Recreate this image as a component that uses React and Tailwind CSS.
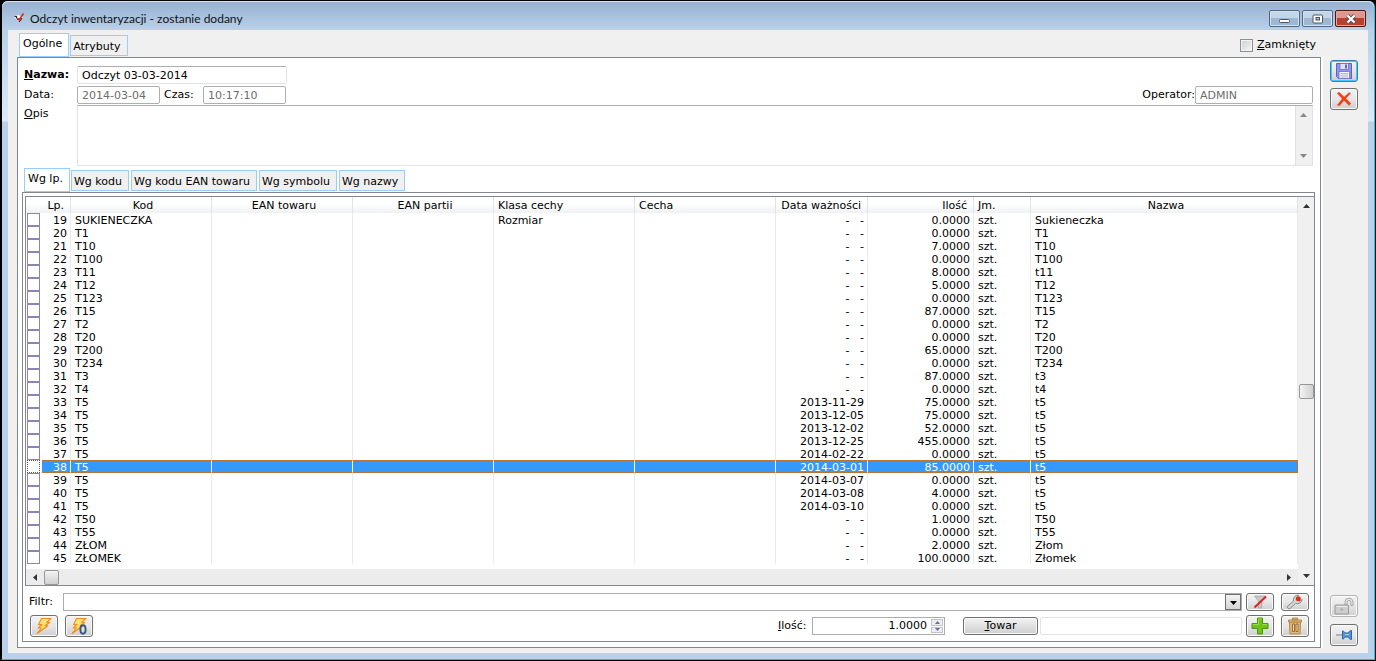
import React, { useState } from 'react';

const NAMES = { 19: 'Sukieneczka', 23: 't11', 31: 't3', 32: 't4', 44: 'Złom', 45: 'Złomek' };

// lp, code, expiry date, quantity
const ITEMS = [
  [19, 'SUKIENECZKA', '', '0.0000'],
  [20, 'T1', '', '0.0000'],
  [21, 'T10', '', '7.0000'],
  [22, 'T100', '', '0.0000'],
  [23, 'T11', '', '8.0000'],
  [24, 'T12', '', '5.0000'],
  [25, 'T123', '', '0.0000'],
  [26, 'T15', '', '87.0000'],
  [27, 'T2', '', '0.0000'],
  [28, 'T20', '', '0.0000'],
  [29, 'T200', '', '65.0000'],
  [30, 'T234', '', '0.0000'],
  [31, 'T3', '', '87.0000'],
  [32, 'T4', '', '0.0000'],
  [33, 'T5', '2013-11-29', '75.0000'],
  [34, 'T5', '2013-12-05', '75.0000'],
  [35, 'T5', '2013-12-02', '52.0000'],
  [36, 'T5', '2013-12-25', '455.0000'],
  [37, 'T5', '2014-02-22', '0.0000'],
  [38, 'T5', '2014-03-01', '85.0000'],
  [39, 'T5', '2014-03-07', '0.0000'],
  [40, 'T5', '2014-03-08', '4.0000'],
  [41, 'T5', '2014-03-10', '0.0000'],
  [42, 'T50', '', '1.0000'],
  [43, 'T55', '', '0.0000'],
  [44, 'ZŁOM', '', '2.0000'],
  [45, 'ZŁOMEK', '', '100.0000'],
];

const itemName = (lp, code) => NAMES[lp] || (code === 'T5' ? 't5' : code);

const COLUMNS = [
  { label: 'Lp.', col: 'w-[29px]', head: 'text-right pr-1.5', cell: 'text-right pr-[3px]' },
  { label: 'Kod', col: 'w-[141px]', head: 'text-center pl-1', cell: 'pl-1' },
  { label: 'EAN towaru', col: 'w-[141px]', head: 'text-center pl-1', cell: 'pl-1' },
  { label: 'EAN partii', col: 'w-[141px]', head: 'text-center pl-1', cell: 'pl-1' },
  { label: 'Klasa cechy', col: 'w-[141px]', head: 'text-left pl-1', cell: 'pl-1' },
  { label: 'Cecha', col: 'w-[141px]', head: 'text-left pl-1', cell: 'pl-1' },
  { label: 'Data ważności', col: 'w-[92px]', head: 'text-right pr-1.5', cell: 'text-right pr-[3px] whitespace-pre' },
  { label: 'Ilość', col: 'w-[106px]', head: 'text-right pr-1.5', cell: 'text-right pr-[3px]' },
  { label: 'Jm.', col: 'w-[57px]', head: 'text-left pl-1', cell: 'pl-1' },
  { label: 'Nazwa', col: 'w-auto', head: 'text-center pl-1', cell: 'pl-1' },
];

// Small raised button that holds a single icon
const IconButton = ({ label, className = 'h-[22px] border-[#707070]', children }) => (
  <button
    type="button"
    aria-label={label}
    className={`flex w-7 shrink-0 items-center justify-center rounded-[3px] border bg-linear-to-b from-[#f3f3f3] via-[#e6e6e6] to-[#cfcfcf] shadow-[inset_0_0_0_1px_#fafafa] ${className}`}
  >
    {children}
  </button>
);

const Arrow = ({ dir, className = 'fill-[#333]' }) => {
  const points = {
    up: '0,5 3.5,1 7,5',
    down: '0,1 7,1 3.5,5',
    left: '5,0 1,3.5 5,7',
    right: '1,0 5,3.5 1,7',
  };
  const vertical = dir === 'up' || dir === 'down';
  return (
    <svg width={vertical ? 7 : 6} height={vertical ? 6 : 7} className={className} aria-hidden="true">
      <polygon points={points[dir]} />
    </svg>
  );
};

const Tabs = ({ tabs, active, onChange }) => (
  <div role="tablist" className="flex h-6 items-end gap-0.5">
    {tabs.map((tab) => (
      <button
        key={tab}
        type="button"
        role="tab"
        aria-selected={tab === active}
        onClick={() => onChange(tab)}
        className={
          tab === active
            ? '-mr-px h-6 border border-[#99ccff] bg-white pr-1.5 pb-0.5 pl-[3px] whitespace-nowrap'
            : 'mb-px h-[21px] border border-[#99ccff] bg-[#f0f0f0] pt-0.5 pr-1.5 pl-0.5 whitespace-nowrap'
        }
      >
        {tab}
      </button>
    ))}
  </div>
);

const Lightning = ({ zero }) => (
  <svg width="18" height="18" viewBox="0 0 18 18" aria-hidden="true">
    <path
      d="M6.500 1.500H16l-4.600 3.700h3.400l-4.600 3.600h2.600L2.200 16.500 6.300 11H3.200l3.600-3.400H3.600z"
      fill="#ffdf70"
      stroke="#f58a1c"
      strokeWidth="1.100"
      strokeLinejoin="round"
    />
    <path d="M8 2.800h5L7.500 6.500" fill="none" stroke="#fff0b0" strokeWidth=".8" />
    {zero && <ellipse cx="13" cy="12.500" rx="2.600" ry="4.200" fill="none" stroke="#34567f" strokeWidth="1.900" />}
  </svg>
);

const SaveIcon = () => (
  <svg width="18" height="18" viewBox="0 0 18 18" aria-hidden="true">
    <path d="M1.500 1.500h15v15h-13l-2-2z" fill="#9194ea" stroke="#5d61c0" />
    <rect x="5" y="1.500" width="8.500" height="6" fill="#dfe2f6" stroke="#6c70cc" strokeWidth=".8" />
    <rect x="10" y="2.500" width="2" height="4" fill="#6467c6" />
    <rect x="4" y="9.500" width="10.500" height="7" fill="#f2f3fb" stroke="#6c70cc" strokeWidth=".8" />
    <path d="M5.500 11.500h7.500M5.500 13.200h7.500M5.500 15h7.500" stroke="#a9a9b8" strokeWidth=".8" />
  </svg>
);

const CancelIcon = () => (
  <svg width="16" height="16" viewBox="0 0 16 16" aria-hidden="true">
    <path d="M1.200 2.200l2-1L8.200 6l5-4.500 1.300.8L9.800 7.600l5 4.800-1.600 2L8 9.500l-4.300 5-2.500-.3 5-6.400z" fill="#ee4218" stroke="#e03a14" strokeWidth=".4" />
  </svg>
);

const FilterOffIcon = () => (
  <svg width="16" height="14" viewBox="0 0 16 14" aria-hidden="true">
    <path d="M2.500 1h11L9.600 6v7H6.400V6z" fill="#c8c8c8" stroke="#a4a4a4" strokeWidth=".8" />
    <path d="M2.500 12.500L14 1.500" stroke="#e02020" strokeWidth="2" />
  </svg>
);

const WrenchIcon = () => (
  <svg width="18" height="16" viewBox="0 0 18 16" aria-hidden="true">
    <path
      d="M12.500 1.200a4.600 4.600 0 0 0-5 5.800L1.800 12a1.700 1.700 0 0 0 2.400 2.400L9.600 9.300a4.600 4.600 0 0 0 6.500-3.800l-3 1.700-2.300-2.400z"
      fill="#d4d4d4"
      stroke="#8a8a8a"
      strokeWidth="1"
    />
    <circle cx="12.300" cy="4.800" r="2.500" fill="#dc3018" />
  </svg>
);

const PlusIcon = () => (
  <svg width="18" height="18" viewBox="0 0 18 18" aria-hidden="true">
    <path d="M6.500 1h5v5.500H17v5h-5.500V17h-5v-5.500H1v-5h5.500z" fill="#6cc417" stroke="#4a9410" />
    <path d="M7.500 2h3M2 7.500h5.500V3M11.500 7.500H16" fill="none" stroke="#a0e050" />
  </svg>
);

const TrashIcon = () => (
  <svg width="16" height="18" viewBox="0 0 16 18" aria-hidden="true">
    <path d="M2.500 5h11l-.5 12H3z" fill="#e2b878" stroke="#b58646" />
    <path d="M1.500 3h13v2h-13zM5.500 1h5v2h-5z" fill="#e6bf84" stroke="#b58646" />
    <path d="M5.500 7h2v7.500h-2zM9 7h2v7.500H9z" fill="#f3dcb4" stroke="#8a622c" strokeWidth=".9" />
  </svg>
);

const UnlockIcon = () => (
  <svg width="20" height="18" viewBox="0 0 20 18" aria-hidden="true">
    <path d="M11 8V5a4 3.800 0 0 1 8 0v3.500h-2.200V5.200a1.800 1.800 0 0 0-3.600 0V8z" fill="#e6e6e6" stroke="#a0a0a0" strokeWidth=".9" />
    <rect x="1" y="8" width="13.500" height="9" rx="1" fill="#cdcdcd" stroke="#989898" />
    <path d="M2.500 9.500h10.500" stroke="#eee" />
    <circle cx="7.800" cy="12.500" r="1.300" fill="#aaa" />
  </svg>
);

const PinIcon = () => (
  <svg width="18" height="14" viewBox="0 0 18 14" aria-hidden="true">
    <path d="M1 7h7" stroke="#a0a0a0" strokeWidth="1.500" />
    <path d="M7.500 3v8c1.500 0 2-1.200 2.500-2h3.500c.5 1.200 1 2.500 3 2.500v-9c-2 0-2.500 1.300-3 2.500H10c-.5-.8-1-2-2.500-2z" fill="#4f97da" stroke="#2a67a8" />
    <path d="M10 6.500h4" stroke="#a9d2f6" />
  </svg>
);

const TitleBar = () => (
  <header className="flex h-[29px] items-center rounded-t-md bg-linear-to-b from-[#97b0cf] to-[#b9d1ea] pr-2 pl-[11px] shadow-[inset_0_1px_0_#d5e2f0]">
    <svg width="12" height="12" viewBox="0 0 12 12" className="mt-1 shrink-0" aria-hidden="true">
      <path d="M1 5l4-2 5 2-4 5z" fill="#fff" />
      <path d="M1.500 4.500h2v2M6 10l3-4M4 7.500h2" fill="none" stroke="#222" strokeWidth="1.200" />
      <path d="M4.500 6L6 8l4.500-6.500" fill="none" stroke="#d02818" strokeWidth="1.500" />
    </svg>
    <h1 className="mt-1.5 ml-[5px] font-[Lato,'Open_Sans',sans-serif] text-xs text-[#111]">Odczyt inwentaryzacji - zostanie dodany</h1>
    <div className="mt-1.5 ml-auto flex gap-0.5">
      <button type="button" aria-label="Minimalizuj" className="flex h-[17px] w-[31px] items-center justify-center rounded-xs border border-[#53677f] bg-linear-to-b from-[#c3d5e8] from-50% to-[#9db8d3] to-50% shadow-[inset_0_0_0_1px_#d4e1ee]">
        <svg width="12" height="10" aria-hidden="true"><rect x=".5" y="5.500" width="10" height="3" rx="1" fill="#fff" stroke="#4d5564" /></svg>
      </button>
      <button type="button" aria-label="Przywróć" className="flex h-[17px] w-[31px] items-center justify-center rounded-xs border border-[#53677f] bg-linear-to-b from-[#c3d5e8] from-50% to-[#9db8d3] to-50% shadow-[inset_0_0_0_1px_#d4e1ee]">
        <svg width="12" height="10" aria-hidden="true">
          <rect x="1" y="1" width="9.500" height="8" rx="1" fill="#fff" stroke="#4d5564" />
          <rect x="4" y="3.500" width="3.500" height="2.500" fill="#9db8d3" stroke="#4d5564" />
        </svg>
      </button>
      <button type="button" aria-label="Zamknij" className="flex h-[17px] w-[31px] items-center justify-center rounded-xs border border-[#4e1611] bg-linear-to-b from-[#dc9a8e] from-50% to-[#b9402c] to-50% shadow-[inset_0_0_0_1px_#e3a99f]">
        <svg width="12" height="10" viewBox="0 0 12 10" aria-hidden="true">
          <path d="M2.500 1.500l7 7M9.500 1.500l-7 7" stroke="#4d5564" strokeWidth="4" />
          <path d="M2.500 1.500l7 7M9.500 1.500l-7 7" stroke="#fff" strokeWidth="2.200" />
        </svg>
      </button>
    </div>
  </header>
);

const HeaderForm = () => (
  <form className="flex flex-col pt-2 pr-[7px] pl-1.5">
    <div className="mb-0.5 flex h-[18px] items-center">
      <label htmlFor="nazwa" className="w-[53px] shrink-0 font-bold"><u>N</u>azwa:</label>
      <input id="nazwa" defaultValue="Odczyt 03-03-2014" className="h-[18px] w-[210px] rounded-xs border border-[#e2e3ea] border-t-[#abadb3] bg-white px-1" />
    </div>
    <div className="mb-px flex h-[18px] items-center">
      <label htmlFor="data" className="w-[53px] shrink-0">Data:</label>
      <input id="data" disabled defaultValue="2014-03-04" className="h-[18px] w-[83px] rounded-xs border border-[#afafaf] bg-white px-1 text-[#6d6d6d]" />
      <label htmlFor="czas" className="w-[43px] shrink-0 pl-1">Czas:</label>
      <input id="czas" disabled defaultValue="10:17:10" className="h-[18px] w-[83px] rounded-xs border border-[#afafaf] bg-white px-1 text-[#6d6d6d]" />
      <label htmlFor="operator" className="ml-auto">Operator:</label>
      <input id="operator" disabled defaultValue="ADMIN" className="h-[18px] w-[118px] rounded-xs border border-[#afafaf] bg-white px-1 text-[#6d6d6d]" />
    </div>
    <div className="flex">
      <label htmlFor="opis" className="w-[53px] shrink-0 pt-px"><u>O</u>pis</label>
      <div className="flex h-[61px] grow border border-[#e2e3ea] border-t-[#abadb3]">
        <textarea id="opis" className="h-full grow resize-none overflow-hidden px-1 outline-none" />
        <div className="flex w-[17px] flex-col items-center justify-between bg-[#f0f0f0] py-1.5 shadow-[inset_1px_0_0_#e0e0e0]">
          <Arrow dir="up" className="fill-[#888]" />
          <Arrow dir="down" className="fill-[#888]" />
        </div>
      </div>
    </div>
  </form>
);

const ItemsTable = ({ selected, onSelect }) => (
  <table className="w-full table-fixed border-separate border-spacing-0">
    <colgroup>
      <col className="w-4" />
      {COLUMNS.map((c) => <col key={c.label} className={c.col} />)}
    </colgroup>
    <thead>
      <tr className="h-4">
        <th className="bg-linear-to-b from-white from-40% to-[#eff1f2] p-0" aria-label="Zaznacz" />
        {COLUMNS.map((c) => (
          <th key={c.label} className={`border-r border-[#e0e3e6] bg-linear-to-b from-white from-40% to-[#eff1f2] pt-0.5 pb-0 leading-[14px] font-normal whitespace-nowrap ${c.head}`}>
            {c.label}
          </th>
        ))}
      </tr>
    </thead>
    <tbody>
      {ITEMS.map(([lp, code, date, qty]) => {
        const isSelected = lp === selected;
        const cells = [lp, code, '', '', lp === 19 ? 'Rozmiar' : '', '', date || '-   -', qty, 'szt.', itemName(lp, code)];
        return (
          <tr key={lp} onClick={() => onSelect(lp)} className="h-[13px]">
            <td className="p-0 pl-px">
              <input
                type="checkbox"
                aria-label={`Pozycja ${lp}`}
                className={`block h-[13px] w-[13px] appearance-none border bg-white ${isSelected ? 'border-dotted border-[#555]' : 'border-[#8c84b8]'}`}
              />
            </td>
            {cells.map((value, i) => (
              <td
                key={COLUMNS[i].label}
                className={`pt-0.5 pb-0 ${COLUMNS[i].cell} ${
                  isSelected
                    ? 'border-y border-r border-y-[#b87430] border-r-white bg-[#3399ff] leading-[9px] text-white last:border-r-[#b87430]'
                    : 'border-r border-[#ebebeb] leading-[11px]'
                }`}
              >
                {value}
              </td>
            ))}
          </tr>
        );
      })}
    </tbody>
  </table>
);

const BottomBar = () => (
  <div className="flex flex-col gap-1 pt-[7px] pr-[5px] pb-1 pl-1.5">
    <div className="flex items-center">
      <label htmlFor="filtr" className="w-[34px] shrink-0">Filtr:</label>
      <div className="relative mr-1 grow">
        <select id="filtr" className="block h-[18px] w-full appearance-none border border-[#abadb3] bg-white px-1">
          <option value="" />
        </select>
        <span className="pointer-events-none absolute top-px right-px flex h-4 w-4 items-center justify-center border border-[#707070] bg-linear-to-b from-[#f3f3f3] to-[#d5d5d5] pt-0.5">
          <Arrow dir="down" className="fill-black" />
        </span>
      </div>
      <div className="flex gap-[7px]">
        <IconButton label="Wyczyść filtr" className="h-[18px] border-[#707070]"><FilterOffIcon /></IconButton>
        <IconButton label="Konstruktor filtra" className="h-[18px] border-[#707070]"><WrenchIcon /></IconButton>
      </div>
    </div>
    <div className="flex items-center">
      <div className="flex gap-[7px] pl-px">
        <IconButton label="Generuj"><Lightning /></IconButton>
        <IconButton label="Zeruj"><Lightning zero /></IconButton>
      </div>
      <label htmlFor="ilosc" className="ml-auto w-[34px] whitespace-nowrap"><u>I</u>lość:</label>
      <div className="flex h-[18px] w-[133px] border border-[#abadb3] bg-white">
        <input id="ilosc" defaultValue="1.0000" className="w-full min-w-0 pr-1 text-right outline-none" />
        <div className="mr-px flex w-3 shrink-0 flex-col gap-px py-px">
          <button type="button" aria-label="Zwiększ" className="flex grow items-center justify-center border border-[#c4c4c4] bg-[#eee]">
            <svg width="5" height="3" className="fill-[#5a70b4]" aria-hidden="true"><polygon points="0,3 2.500,0 5,3" /></svg>
          </button>
          <button type="button" aria-label="Zmniejsz" className="flex grow items-center justify-center border border-[#c4c4c4] bg-[#eee]">
            <svg width="5" height="3" className="fill-[#5a70b4]" aria-hidden="true"><polygon points="0,0 5,0 2.500,3" /></svg>
          </button>
        </div>
      </div>
      <button type="button" className="ml-[18px] h-[18px] w-[75px] rounded-[3px] border border-[#707070] bg-linear-to-b from-[#f3f3f3] to-[#cfcfcf] leading-4 shadow-[inset_0_0_0_1px_#fafafa]">
        <u>T</u>owar
      </button>
      <input aria-label="Towar" className="mr-1 ml-0.5 h-[18px] w-[202px] rounded-xs border border-[#e2e3ea] bg-white px-1" />
      <div className="flex gap-[7px]">
        <IconButton label="Dodaj"><PlusIcon /></IconButton>
        <IconButton label="Usuń"><TrashIcon /></IconButton>
      </div>
    </div>
  </div>
);

export default function App() {
  const [mainTab, setMainTab] = useState('Ogólne');
  const [sortTab, setSortTab] = useState('Wg lp.');
  const [selected, setSelected] = useState(38);

  return (
    <div className="flex min-h-screen flex-col bg-black p-px font-['DejaVu_Sans',Verdana,sans-serif] text-[11px] leading-4 text-black">
      <div className="flex grow flex-col rounded-t-md border-r border-b border-l border-[#1fc3dc] border-l-black bg-[linear-gradient(#b9d1ea_30px,#dce9f7_120px,#b9d1ea_121px)]">
        <TitleBar />
        <div className="mx-1.5 mb-1.5 flex grow bg-[#f0f0f0]">
          <main className="flex min-w-0 grow flex-col pt-[3px] pb-[5px] pl-[9px]">
            <div className="flex items-start justify-between pr-[7px] pl-0.5">
              <Tabs tabs={['Ogólne', 'Atrybuty']} active={mainTab} onChange={setMainTab} />
              <label className="flex items-center gap-1 pt-1">
                <input type="checkbox" className="h-[13px] w-[13px] appearance-none border border-[#8e8f8f] bg-linear-to-br from-[#cbcfd5] to-[#f6f6f6] shadow-[inset_0_0_0_1px_#f4f4f4]" />
                <span><u>Z</u>amknięty</span>
              </label>
            </div>
            <div className="flex grow flex-col bg-white pr-0.5">
              <section className="flex grow flex-col border border-[#828790] bg-white">
                <HeaderForm />
                <div className="mt-0.5 pl-1.5">
                  <Tabs
                    tabs={['Wg lp.', 'Wg kodu', 'Wg kodu EAN towaru', 'Wg symbolu', 'Wg nazwy']}
                    active={sortTab}
                    onChange={setSortTab}
                  />
                </div>
                <div className="mr-[5px] mb-[5px] ml-1 flex grow flex-col border border-[#828790]">
                  <div className="mt-[3px] ml-0.5 flex grow border-y border-l border-[#828790]">
                    <div className="flex min-w-0 grow flex-col">
                      <ItemsTable selected={selected} onSelect={setSelected} />
                      {/* Horizontal scroll bar */}
                      <div className="mt-auto flex h-4 items-center justify-between bg-[#ececec] pr-1.5 pl-1.5">
                        <div className="flex items-center gap-1.5">
                          <Arrow dir="left" />
                          <div className="h-[15px] w-[15px] rounded-xs border border-[#979797] bg-linear-to-b from-[#f3f3f3] to-[#d0d0d0]" />
                        </div>
                        <Arrow dir="right" />
                      </div>
                    </div>
                    {/* Vertical scroll bar */}
                    <div className="flex w-4 shrink-0 flex-col items-center justify-between bg-[#f0f0f0] py-1.5">
                      <Arrow dir="up" />
                      <div className="h-[15px] w-[15px] rounded-xs border border-[#979797] bg-linear-to-r from-[#f3f3f3] to-[#d0d0d0]" />
                      <Arrow dir="down" />
                    </div>
                  </div>
                  <BottomBar />
                </div>
              </section>
            </div>
          </main>
          <aside className="flex w-[45px] shrink-0 flex-col gap-1.5 pt-[30px] pb-[7px] pl-[7px]">
            <IconButton label="Zapisz" className="h-[22px] border-[#3c7fb1] ring-1 ring-[#48c8f4] ring-inset"><SaveIcon /></IconButton>
            <IconButton label="Anuluj"><CancelIcon /></IconButton>
            <div className="mt-auto flex flex-col gap-[7px]">
              <IconButton label="Odblokuj" className="h-[22px] border-[#b4b4b4]"><UnlockIcon /></IconButton>
              <IconButton label="Przypnij"><PinIcon /></IconButton>
            </div>
          </aside>
        </div>
      </div>
    </div>
  );
}
